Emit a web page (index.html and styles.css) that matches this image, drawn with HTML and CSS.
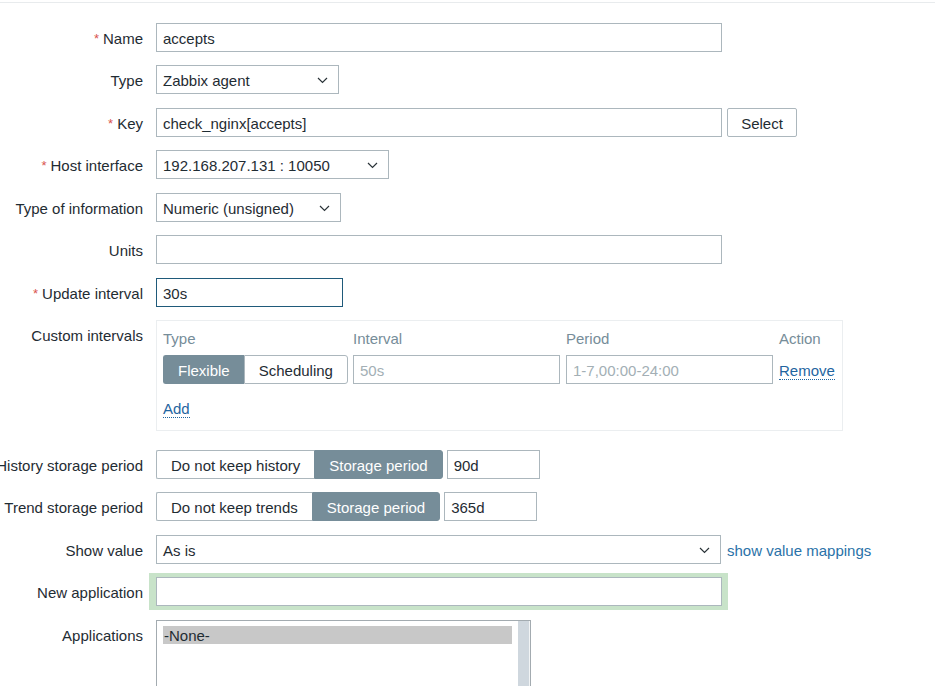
FILE: index.html
```html
<!DOCTYPE html>
<html lang="en">
<head>
<meta charset="utf-8">
<title>Item</title>
<link rel="stylesheet" href="styles.css">
</head>
<body>
<div class="topline"></div>
<div class="form">
  <div class="row">
    <div class="lbl"><span class="req">*</span>Name</div>
    <div class="field"><div class="ctl w-wide">accepts</div></div>
  </div>
  <div class="row">
    <div class="lbl">Type</div>
    <div class="field"><div class="ctl sel w-type">Zabbix agent<svg class="chev" viewBox="0 0 11 7"><path d="M1 1L5.5 5.5L10 1"/></svg></div></div>
  </div>
  <div class="row">
    <div class="lbl"><span class="req">*</span>Key</div>
    <div class="field"><div class="ctl w-wide">check_nginx[accepts]</div><div class="btn">Select</div></div>
  </div>
  <div class="row">
    <div class="lbl"><span class="req">*</span>Host interface</div>
    <div class="field"><div class="ctl sel w-host">192.168.207.131 : 10050<svg class="chev" viewBox="0 0 11 7"><path d="M1 1L5.5 5.5L10 1"/></svg></div></div>
  </div>
  <div class="row">
    <div class="lbl">Type of information</div>
    <div class="field"><div class="ctl sel w-info">Numeric (unsigned)<svg class="chev" viewBox="0 0 11 7"><path d="M1 1L5.5 5.5L10 1"/></svg></div></div>
  </div>
  <div class="row">
    <div class="lbl">Units</div>
    <div class="field"><div class="ctl w-wide"></div></div>
  </div>
  <div class="row">
    <div class="lbl"><span class="req">*</span>Update interval</div>
    <div class="field"><div class="ctl focus w-upd">30s</div></div>
  </div>
  <div class="row row-custom">
    <div class="lbl">Custom intervals</div>
    <div class="field">
      <div class="cbox">
        <div class="cgrid">
          <div class="chead">Type</div>
          <div class="chead">Interval</div>
          <div class="chead">Period</div>
          <div class="chead">Action</div>
          <div class="seg">
            <div class="segbtn on">Flexible</div>
            <div class="segbtn">Scheduling</div>
          </div>
          <div class="ctl ph">50s</div>
          <div class="ctl ph">1-7,00:00-24:00</div>
          <div class="cact"><span class="dlink">Remove</span></div>
        </div>
        <div class="addrow"><span class="dlink">Add</span></div>
      </div>
    </div>
  </div>
  <div class="row">
    <div class="lbl">History storage period</div>
    <div class="field">
      <div class="seg">
        <div class="segbtn">Do not keep history</div>
        <div class="segbtn on">Storage period</div>
      </div>
      <div class="ctl w-hist">90d</div>
    </div>
  </div>
  <div class="row">
    <div class="lbl">Trend storage period</div>
    <div class="field">
      <div class="seg">
        <div class="segbtn">Do not keep trends</div>
        <div class="segbtn on">Storage period</div>
      </div>
      <div class="ctl w-hist">365d</div>
    </div>
  </div>
  <div class="row">
    <div class="lbl">Show value</div>
    <div class="field">
      <div class="ctl sel w-show">As is<svg class="chev" viewBox="0 0 11 7"><path d="M1 1L5.5 5.5L10 1"/></svg></div>
      <span class="link">show value mappings</span>
    </div>
  </div>
  <div class="row">
    <div class="lbl">New application</div>
    <div class="field"><div class="ctl w-wide halo"></div></div>
  </div>
  <div class="row">
    <div class="lbl">Applications</div>
    <div class="field">
      <div class="listbox">
        <div class="lbinner"><div class="opt">-None-</div></div>
        <div class="sbar"></div>
      </div>
    </div>
  </div>
</div>
</body>
</html>
```

FILE: styles.css
```css
html, body {
  margin: 0;
  padding: 0;
  background: #ffffff;
  overflow: hidden;
}
body {
  font-family: "Liberation Sans", Arial, sans-serif;
  font-size: 15px;
  color: #1f2c33;
}
.topline {
  height: 1px;
  margin-top: 2px;
  background: #e8ebed;
}
.form {
  display: flex;
  flex-direction: column;
  gap: 13.45px;
  padding-top: 20px;
}
.row {
  display: grid;
  grid-template-columns: 143px 1fr;
  column-gap: 13px;
  align-items: start;
}
.row-custom {
  margin-bottom: 5.5px;
}
.lbl {
  display: flex;
  justify-content: flex-end;
  white-space: nowrap;
  line-height: 29px;
  height: 29px;
  padding-top: 1px;
  box-sizing: border-box;
}
.req {
  color: #d9534f;
  margin-right: 4px;
  font-size: 13px;
}
.field {
  display: flex;
  align-items: center;
  gap: 5px;
}
.ctl {
  box-sizing: border-box;
  height: 29px;
  line-height: 28px;
  border: 1px solid #acb7bd;
  background: #fff;
  padding: 1px 6px 0 6px;
  white-space: nowrap;
  position: relative;
}
.sel {
  padding-right: 28px;
}
.chev {
  position: absolute;
  right: 10px;
  top: 11px;
  width: 11px;
  height: 7px;
  fill: none;
  stroke: #2a3338;
  stroke-width: 1.2;
}
.w-wide { width: 566px; }
.w-type { width: 183px; }
.w-host { width: 233px; }
.w-info { width: 185px; }
.w-upd { width: 187px; }
.w-show { width: 565px; }
.w-hist { width: 93px; margin-left: -1px; }
.focus {
  border-color: #1f5a7a;
}
.btn {
  box-sizing: border-box;
  height: 29px;
  line-height: 28px;
  padding-top: 1px;
  width: 70px;
  text-align: center;
  border: 1px solid #acb7bd;
  border-radius: 2px;
  background: #fff;
}
.seg {
  display: flex;
  height: 29px;
  box-sizing: border-box;
}
.segbtn {
  box-sizing: border-box;
  height: 29px;
  line-height: 28px;
  padding: 1px 14px 0 14px;
  border: 1px solid #acb7bd;
  background: #fff;
  white-space: nowrap;
}
.segbtn:first-child {
  border-radius: 2px 0 0 2px;
  border-right: none;
}
.segbtn:last-child {
  border-radius: 0 3px 3px 0;
}
.segbtn.on {
  background: #768d99;
  border-color: #768d99;
  color: #ffffff;
}
.seg .segbtn.on:first-child {
  border-radius: 3px 0 0 3px;
}
.cbox {
  box-sizing: border-box;
  width: 687px;
  height: 111px;
  border: 1px solid #ebeef0;
  padding: 5px 6px 0 6px;
}
.cgrid {
  display: grid;
  grid-template-columns: 184px 207px 207px auto;
  grid-template-rows: 24px 29px;
  column-gap: 6px;
  row-gap: 5px;
}
.chead {
  color: #768d99;
  line-height: 24px;
  padding-top: 1px;
}
.ph {
  color: #a3afb5;
}
.cact {
  line-height: 29px;
  padding-top: 1px;
}
.dlink {
  color: #1f65a0;
  border-bottom: 1px dotted #1f65a0;
  line-height: 1;
}
.addrow {
  margin-top: 13px;
  line-height: 22px;
  padding-top: 1px;
}
.link {
  color: #2a72a8;
  margin-left: 1px;
  padding-top: 2px;
}
.halo {
  box-shadow: 0 0 0 4px #c8e3c9, -3px 0 0 4px #c8e3c9, 2px 0 0 4px #c8e3c9;
}
.listbox {
  box-sizing: border-box;
  width: 375px;
  height: 90px;
  border: 1px solid #a3abb0;
  background: #fff;
  display: flex;
}
.lbinner {
  flex: 1;
  padding: 5px 6px 0 6px;
}
.opt {
  background: #c8c8c8;
  height: 18px;
  line-height: 19px;
  padding-left: 1px;
}
.sbar {
  width: 11px;
  background: #cfd7de;
  border-right: 1px solid #f2f4f5;
}
```
